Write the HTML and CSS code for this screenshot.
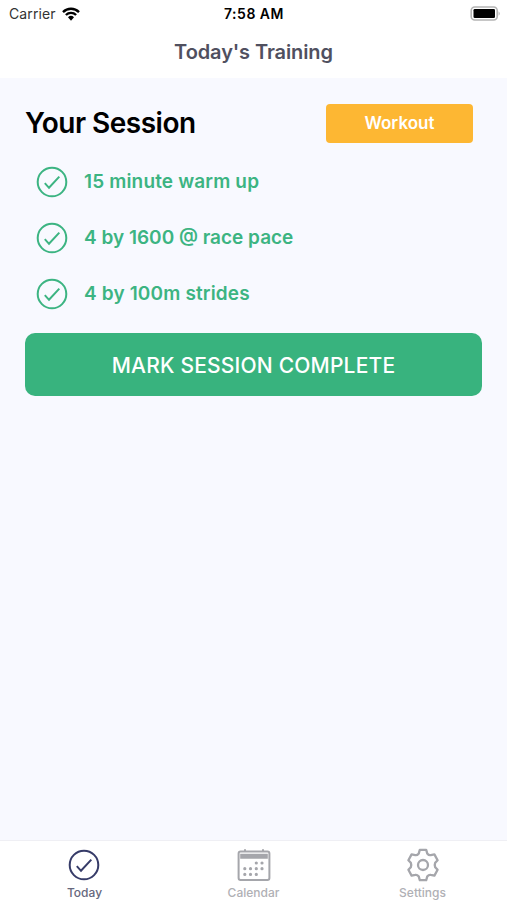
FILE: index.html
```
<!DOCTYPE html>
<html lang="en">
<head>
  <meta charset="UTF-8">
  <meta name="viewport" content="width=device-width, initial-scale=1.0">
  <title>Today's Training</title>
  <link rel="stylesheet" href="styles.css">
</head>
<body>
  <!-- shared check icon -->
  <svg class="symbols" width="0" height="0">
    <symbol id="check" viewBox="0 0 32 32">
      <circle cx="16" cy="16" r="14.3"/>
      <path d="M8.8 17.2l4.2 4.6L23.3 10.6"/>
    </symbol>
  </svg>
  <div class="app">
    <header class="header">
      <div class="status-bar">
        <div class="carrier">
          <span class="carrier-name">Carrier</span>
          <svg class="wifi" width="18" height="14" viewBox="0 0 18 14">
            <path d="M1 5.1a11.4 11.4 0 0 1 16 0M3.9 8a7.3 7.3 0 0 1 10.2 0"/>
            <path class="wifi-dot" d="M6 10.3a4.3 4.3 0 0 1 6 0L9 13.7z"/>
          </svg>
        </div>
        <span class="time">7:58 AM</span>
        <div class="battery">
          <svg width="31" height="15" viewBox="0 0 31 15">
            <rect class="battery-case" x="1.2" y="1" width="26" height="13" rx="3.5"/>
            <rect x="3.5" y="3" width="21.5" height="9" rx="1.3"/>
            <path class="battery-tip" d="M28.6 5.2q2.2 2.3 0 4.6z"/>
          </svg>
        </div>
      </div>
      <h1>Today's Training</h1>
    </header>

    <main class="content">
      <div class="session-header">
        <h2>Your Session</h2>
        <span class="tag">Workout</span>
      </div>
      <ul class="steps">
        <li class="step"><svg class="check"><use href="#check"/></svg><span class="step-text wide">15 minute warm up</span></li>
        <li class="step"><svg class="check"><use href="#check"/></svg><span class="step-text">4 by 1600 @ race pace</span></li>
        <li class="step"><svg class="check"><use href="#check"/></svg><span class="step-text wide">4 by 100m strides</span></li>
      </ul>
      <button class="complete-button">MARK SESSION COMPLETE</button>
    </main>

    <nav class="tabs">
      <a class="tab active">
        <svg class="tab-icon" viewBox="0 0 34 34"><use href="#check" x="1" y="1" width="32" height="32"/></svg>
        <span>Today</span>
      </a>
      <a class="tab">
        <svg class="tab-icon calendar" viewBox="0 0 34 34">
          <rect x="1.6" y="3.6" width="30.8" height="28.4" rx="2"/>
          <path class="fill" d="M3.2 5.8h27.6v5H3.2zM7 1.2h2V4H7zM25 1.2h2V4h-2z"/>
          <path class="dots" d="M19.3 15h.01M25 15h.01M7.8 20.7h.01M13.5 20.7h.01M19.3 20.7h.01M25 20.7h.01M7.8 26.4h.01M13.5 26.4h.01M19.3 26.4h.01"/>
        </svg>
        <span>Calendar</span>
      </a>
      <a class="tab">
        <svg class="tab-icon gear" viewBox="-17 -17 34 34">
          <path d="M-3.2-15.2H3.2L4.2-11.6Q6-9.4 7.7-9.9L11.4-10.6L14.6-4.8L12.2-2.2Q11.3 0 12.2 2.2L14.6 4.8L11.4 10.6L7.7 9.9Q6 9.4 4.2 11.6L3.2 15.2H-3.2L-4.2 11.6Q-6 9.4-7.7 9.9L-11.4 10.6L-14.6 4.8L-12.2 2.2Q-11.3 0-12.2-2.2L-14.6-4.8L-11.4-10.6L-7.7-9.9Q-6-9.4-4.2-11.6z"/>
          <circle r="5"/>
        </svg>
        <span>Settings</span>
      </a>
    </nav>
  </div>
</body>
</html>
```
FILE: styles.css
```
* { box-sizing: border-box; }
body { margin: 0; font-family: Inter, "Liberation Sans", sans-serif; }
.symbols { display: block; }
.app {
  display: flex;
  flex-direction: column;
  height: 900px;
  background-color: #f8f9ff;
}
.header { height: 78px; background-color: #fff; }
.status-bar {
  display: grid;
  grid-template-columns: 1fr auto 1fr;
  align-items: center;
  height: 27px;
  padding: 0 6px 0 7px;
}
.carrier {
  display: flex;
  align-items: center;
  gap: 6px;
  padding-left: 2px;
  font-size: 14px;
  letter-spacing: 0.1px;
  color: #333;
}
.wifi { fill: none; stroke: #000; stroke-width: 2.4; }
.wifi .wifi-dot { fill: #000; stroke: none; }
.time { font-size: 14px; font-weight: 600; letter-spacing: 0.5px; }
.battery { display: flex; justify-content: flex-end; }
.battery-case { fill: #fff; stroke: #b4b4b4; stroke-width: 1.6; }
.battery-tip { fill: #aaa; }
h1 {
  margin: 10px 0 0;
  font-size: 20px;
  line-height: 30px;
  font-weight: 600;
  letter-spacing: -0.1px;
  text-align: center;
  color: #50505f;
}

.content { flex: 1; padding: 25px 25px 0; }
.session-header {
  display: flex;
  justify-content: space-between;
  align-items: center;
  height: 40px;
  padding-right: 9px;
}
h2 { margin: 0; font-size: 28px; font-weight: 600; letter-spacing: -0.5px; color: #000; }
.tag {
  width: 147px;
  height: 39px;
  border-radius: 4px;
  background-color: #fdb733;
  color: #fff;
  font-size: 17px;
  font-weight: 600;
  line-height: 39px;
  text-align: center;
}
.steps { margin: 11px 0 0; padding: 0; list-style: none; }
.step {
  display: flex;
  align-items: center;
  gap: 16px;
  height: 56px;
  padding-left: 11px;
  font-size: 19px;
  font-weight: 600;
  color: #3cb482;
}
.step-text { padding-bottom: 2px; }
.step-text.wide { letter-spacing: 0.15px; }
.check { width: 32px; height: 32px; fill: none; stroke: #3cb482; stroke-width: 2; }
.complete-button {
  display: block;
  width: 457px;
  height: 63px;
  margin-top: 11px;
  padding: 1px 0 0;
  border: none;
  border-radius: 10px;
  background-color: #38b37e;
  color: #fff;
  font-family: inherit;
  font-size: 21px;
  font-weight: 500;
  letter-spacing: 0.2px;
}

.tabs {
  display: flex;
  height: 60px;
  border-top: 1px solid #efeff4;
  background-color: #fff;
}
.tab {
  flex: 1;
  display: flex;
  flex-direction: column;
  align-items: center;
  gap: 3px;
  padding-top: 7px;
  font-size: 12px;
  font-weight: 500;
  line-height: 15px;
  color: #b0b0b5;
}
.tab-icon {
  flex-shrink: 0;
  width: 34px;
  height: 34px;
  fill: none;
  stroke: #a5a6ab;
  stroke-width: 2;
}
.calendar .fill { fill: #a5a6ab; stroke: none; }
.calendar .dots { stroke-width: 3.2; stroke-linecap: round; }
.gear { stroke-width: 2.3; stroke-linejoin: round; }
.tab.active { color: #66677d; }
.active .tab-icon { margin-right: 2px; stroke: #363b68; }
```
